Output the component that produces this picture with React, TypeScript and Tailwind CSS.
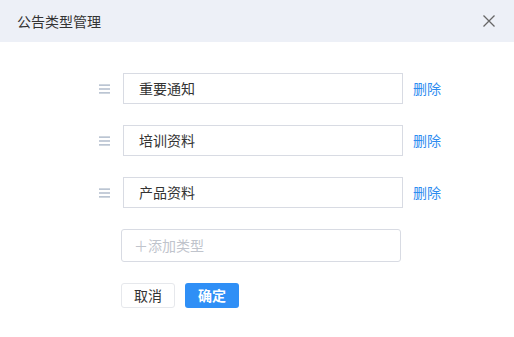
import React from 'react';

const types = ['重要通知', '培训资料', '产品资料'];

function DragHandle() {
  return (
    <svg width="12" height="10" viewBox="0 0 12 10" className="shrink-0">
      <rect x="0" y="0.5" width="11" height="1.2" fill="#9fadc0" />
      <rect x="0" y="4.4" width="11" height="1.2" fill="#9fadc0" />
      <rect x="0" y="8.3" width="11" height="1.2" fill="#9fadc0" />
    </svg>
  );
}

export default function App() {
  return (
    <div
      className="w-[514px] h-[337px] bg-white flex flex-col"
      style={{ fontFamily: '"Noto Sans CJK SC", "Noto Sans", sans-serif' }}
    >
      {/* Header */}
      <div className="h-[42px] shrink-0 bg-[#edf0f7] flex items-center justify-between pl-[17px] pr-[19px]">
        <span className="text-[14px] text-[#333]">公告类型管理</span>
        <svg width="12" height="12" viewBox="0 0 12 12">
          <path d="M0.5 0.5 L11.5 11.5 M11.5 0.5 L0.5 11.5" stroke="#666" strokeWidth="1.3" />
        </svg>
      </div>

      {/* Body */}
      <div className="flex flex-col pl-[99px] pt-[31px]">
        {types.map((t) => (
          <div key={t} className="flex items-center h-[31px] mb-[21px]">
            <DragHandle />
            <div className="ml-[12px] w-[280px] h-[31px] border border-[#d8dbe3] flex items-center pl-[15px] text-[14px] text-[#333]">
              {t}
            </div>
            <span className="ml-[10px] text-[14px] text-[#2d8cf0]">删除</span>
          </div>
        ))}

        <div className="ml-[22px] w-[280px] h-[33px] border border-[#d8dbe3] rounded-[3px] flex items-center pl-[12px] text-[14px] text-[#c0c4cc]">
          ＋添加类型
        </div>

        <div className="ml-[22px] mt-[21px] flex gap-[10px]">
          <button className="w-[54px] h-[25px] border border-[#e6e8ec] rounded-[3px] bg-white text-[14px] text-[#333] flex items-center justify-center">
            取消
          </button>
          <button className="w-[54px] h-[25px] rounded-[3px] bg-[#2f8ff6] text-[14px] font-bold text-white flex items-center justify-center">
            确定
          </button>
        </div>
      </div>
    </div>
  );
}
